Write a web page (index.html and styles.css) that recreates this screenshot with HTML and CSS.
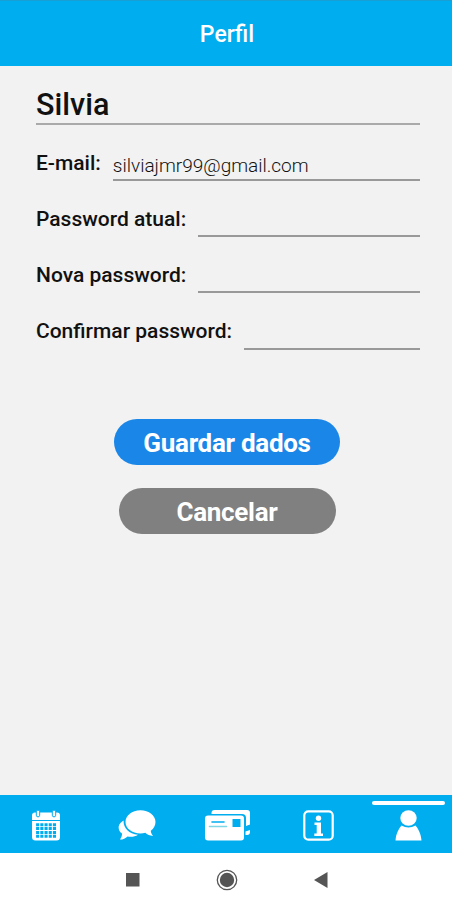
FILE: index.html
```html
<!DOCTYPE html>
<html lang="pt">
<head>
    <meta charset="UTF-8">
    <meta name="viewport" content="width=device-width, initial-scale=1.0">
    <title>Perfil</title>
    <link rel="stylesheet" href="styles.css">
</head>
<body>
    <header class="header">Perfil</header>

    <main class="content">
        <form class="profile-form">
            <input type="text" class="name" value="Silvia" aria-label="Nome">
            <div class="field email">
                <label for="email">E-mail:</label>
                <input type="text" id="email" value="silviajmr99@gmail.com">
            </div>
            <div class="field current">
                <label for="current">Password atual:</label>
                <input type="password" id="current">
            </div>
            <div class="field new">
                <label for="new">Nova password:</label>
                <input type="password" id="new">
            </div>
            <div class="field confirm">
                <label for="confirm">Confirmar password:</label>
                <input type="password" id="confirm">
            </div>
        </form>

        <div class="buttons">
            <button type="button" class="save">Guardar dados</button>
            <button type="button" class="cancel">Cancelar</button>
        </div>
    </main>

    <nav class="tabs">
        <a class="tab">
            <svg width="28" height="31" viewBox="0 0 28 31">
                <path fill="#fff" d="M3 2.500h22a3 3 0 0 1 3 3V10H0V5.500a3 3 0 0 1 3-3z"/>
                <path fill="#fff" stroke="#00adef" stroke-width="1" d="M4.300 1.800a1.700 1.700 0 0 1 3.400 0v3.400a1.700 1.700 0 0 1-3.400 0zM20.300 1.800a1.700 1.700 0 0 1 3.400 0v3.400a1.700 1.700 0 0 1-3.400 0z"/>
                <path fill="#fff" d="M0 10.900h28v16a3.500 3.500 0 0 1-3.500 3.500h-21A3.500 3.500 0 0 1 0 26.900z"/>
                <path stroke="#00adef" stroke-width="3" stroke-dasharray="3.100 1.100" d="M4.100 14.700h20M4.100 18.600h20M4.100 22.500h20M4.100 26.300h20"/>
            </svg>
        </a>
        <a class="tab">
            <svg width="38" height="31" viewBox="0 0 38 31">
                <path fill="#fff" d="M5.500 10.500C1.500 13 0 16 .8 19c.5 2 1.700 3.500 3.200 4.600.2 2-.7 4-2 6 3 0 5.500-1.200 7.500-3.100 4 .8 7.500.2 10.500-1.700C11 24 5.500 18.500 5.500 10.500z"/>
                <path fill="#fff" d="M22.500.3C31 .3 37.500 5.500 37.500 12c0 3.500-1.700 6.500-4.700 8.700.1 2 1 3.600 2.200 5.300-3.200-.2-5.800-1.400-7.700-3.200-1.500.4-3.100.6-4.800.6-8.500 0-15-5-15-11.400S14 .3 22.500.3z"/>
            </svg>
        </a>
        <a class="tab">
            <svg width="45" height="31" viewBox="0 0 45 31">
                <path fill="#fff" d="M6.500 4V3a3 3 0 0 1 3-3H42a3 3 0 0 1 3 3v11.500l-4 1.500V8a4 4 0 0 0-4-4z"/>
                <rect fill="#fff" y="5.500" width="39" height="25" rx="3"/>
                <path fill="#fff" d="M40.500 21.500l4.500-1.500v2a3 3 0 0 1-3 3h-1.500z"/>
                <path fill="#00adef" d="M27.500 9h8v8h-8z"/>
                <path stroke="#00adef" stroke-width="1.600" stroke-linecap="round" d="M7 12h12"/>
                <path stroke="#7fd6e4" stroke-width="1.600" stroke-linecap="round" d="M4.500 16.500h17"/>
            </svg>
        </a>
        <a class="tab">
            <svg width="31" height="31" viewBox="0 0 31 31">
                <rect x="1.300" y="1.300" width="28.400" height="28.400" rx="4" fill="none" stroke="#fff" stroke-width="2.200"/>
                <circle cx="15.500" cy="8.300" r="2.700" fill="#fff"/>
                <path fill="#fff" d="M11.500 12.500H18v11h2V26h-8.700v-2.500h2.400V15h-2.200z"/>
            </svg>
        </a>
        <a class="tab active">
            <svg width="27" height="31" viewBox="0 0 27 31">
                <ellipse cx="13.500" cy="8" rx="8.200" ry="7.800" fill="#fff"/>
                <path fill="#fff" d="M6.500 15.600q7 3.800 14 0c2.500 3 5.500 8 6 14.900H.5c.5-6.900 3.500-11.900 6-14.900z"/>
            </svg>
        </a>
    </nav>

    <footer class="system-bar">
        <svg width="14" height="14" viewBox="0 0 14 14"><rect width="13.500" height="13.500" fill="#555"/></svg>
        <svg width="22" height="22" viewBox="0 0 22 22">
            <circle cx="11" cy="11" r="9.700" fill="none" stroke="#555" stroke-width="1.300"/>
            <circle cx="11" cy="11" r="7.200" fill="#555"/>
        </svg>
        <svg width="14" height="16" viewBox="0 0 14 16"><path fill="#555" d="M0 8L13.500 0v16z"/></svg>
    </footer>
</body>
</html>
```
FILE: styles.css
```css
* {
    box-sizing: border-box;
}

body {
    margin: 0;
    height: 900px;
    display: flex;
    flex-direction: column;
    overflow: hidden;
    background-color: #f2f2f2;
    font-family: Roboto, sans-serif;
    color: #111;
}

.header {
    height: 66px;
    padding: 4px 0 0 2px;
    border-top: 1px solid #1a9fd4;
    background-color: #00adef;
    color: #fff;
    font-size: 23px;
    font-weight: 500;
    line-height: 60px;
    text-align: center;
}

.content {
    flex: 1;
    padding: 18px 32px 0 36px;
}

.profile-form {
    display: flex;
    flex-direction: column;
}

input {
    min-width: 0;
    padding: 0;
    border: 0;
    border-bottom: 2px solid #999;
    border-radius: 0;
    background: none;
    color: inherit;
    font-family: inherit;
    outline: none;
}

.name {
    height: 41px;
    padding-top: 2px;
    border-bottom-color: #aaa;
    font-size: 30.5px;
    font-weight: 500;
}

.field {
    display: flex;
    height: 56px;
}

.field label {
    padding-top: 26px;
    font-size: 21px;
    font-weight: 500;
    line-height: 24px;
    white-space: nowrap;
}

.field input {
    flex: 1;
    margin-left: 12px;
    font-size: 19px;
    font-weight: 300;
}

.email input {
    padding-top: 27px;
}

.confirm {
    height: 57px;
}

.buttons {
    display: flex;
    flex-direction: column;
    align-items: center;
    gap: 23px;
    margin: 69px 2px 0 0;
}

button {
    height: 46px;
    padding: 2px 0 0;
    border: 0;
    border-radius: 23px;
    color: #fff;
    font-family: inherit;
    font-size: 26px;
    font-weight: 700;
    letter-spacing: -0.3px;
}

.save {
    width: 226px;
    background-color: #1a86e8;
}

.cancel {
    width: 217px;
    background-color: #808080;
}

.tabs {
    display: flex;
    height: 58px;
    margin-right: -2px;
    padding-left: 1px;
    background-color: #00adef;
}

.tab {
    flex: 1;
    padding-top: 15px;
    text-align: center;
}

.active {
    position: relative;
}

.active::before {
    content: "";
    position: absolute;
    top: 6px;
    left: 9px;
    width: 73px;
    height: 4px;
    border-radius: 2px;
    background-color: #fff;
}

.system-bar {
    display: flex;
    justify-content: center;
    align-items: center;
    gap: 76px;
    height: 47px;
    padding: 7px 0 0 2px;
    background-color: #fff;
}
```
